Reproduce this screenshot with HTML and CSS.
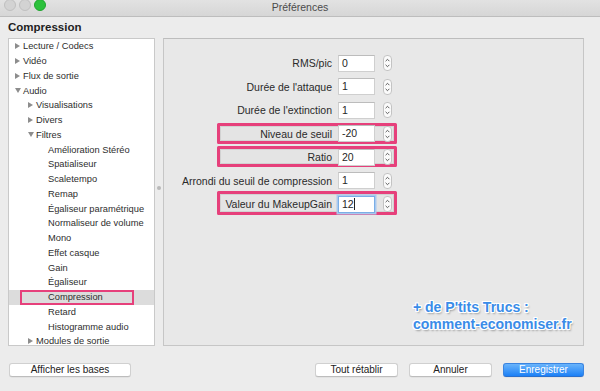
FILE: index.html
```html
<!DOCTYPE html>
<html lang="fr">
<head>
<meta charset="utf-8">
<title>Préférences</title>
<link rel="stylesheet" href="styles.css">
</head>
<body>
<div class="window">
  <div class="titlebar">
    <div class="lights">
      <span class="light gray"></span>
      <span class="light gray"></span>
      <span class="light green"></span>
    </div>
    <div class="title">Préférences</div>
    <div></div>
  </div>
  <div class="heading">Compression</div>
  <div class="main">
    <div class="tree">
      <div class="row l0"><span class="arr right"></span>Lecture / Codecs</div>
      <div class="row l0"><span class="arr right"></span>Vidéo</div>
      <div class="row l0"><span class="arr right"></span>Flux de sortie</div>
      <div class="row l0"><span class="arr down"></span>Audio</div>
      <div class="row l1"><span class="arr right"></span>Visualisations</div>
      <div class="row l1"><span class="arr right"></span>Divers</div>
      <div class="row l1"><span class="arr down"></span>Filtres</div>
      <div class="row l2">Amélioration Stéréo</div>
      <div class="row l2">Spatialiseur</div>
      <div class="row l2">Scaletempo</div>
      <div class="row l2">Remap</div>
      <div class="row l2">Égaliseur paramétrique</div>
      <div class="row l2">Normaliseur de volume</div>
      <div class="row l2">Mono</div>
      <div class="row l2">Effet casque</div>
      <div class="row l2">Gain</div>
      <div class="row l2">Égaliseur</div>
      <div class="row l2 selected">Compression<span class="tree-hl"></span></div>
      <div class="row l2">Retard</div>
      <div class="row l2">Histogramme audio</div>
      <div class="row l1"><span class="arr right"></span>Modules de sortie</div>
    </div>
    <div class="splitter"><span class="grip"></span></div>
    <div class="panel">
      <div class="form">
        <div class="frow">
          <span class="lbl">RMS/pic</span><span class="input">0</span>
          <svg class="stepper" viewBox="0 0 9 16"><rect x="0.5" y="0.5" width="8" height="15" rx="3.5"/><path d="M2.6 6.2 L4.5 4.3 L6.4 6.2 M2.6 9.8 L4.5 11.7 L6.4 9.8"/></svg>
        </div>
        <div class="frow">
          <span class="lbl">Durée de l'attaque</span><span class="input">1</span>
          <svg class="stepper" viewBox="0 0 9 16"><rect x="0.5" y="0.5" width="8" height="15" rx="3.5"/><path d="M2.6 6.2 L4.5 4.3 L6.4 6.2 M2.6 9.8 L4.5 11.7 L6.4 9.8"/></svg>
        </div>
        <div class="frow">
          <span class="lbl">Durée de l'extinction</span><span class="input">1</span>
          <svg class="stepper" viewBox="0 0 9 16"><rect x="0.5" y="0.5" width="8" height="15" rx="3.5"/><path d="M2.6 6.2 L4.5 4.3 L6.4 6.2 M2.6 9.8 L4.5 11.7 L6.4 9.8"/></svg>
        </div>
        <div class="frow">
          <span class="hl"></span>
          <span class="lbl">Niveau de seuil</span><span class="input">-20</span>
          <svg class="stepper" viewBox="0 0 9 16"><rect x="0.5" y="0.5" width="8" height="15" rx="3.5"/><path d="M2.6 6.2 L4.5 4.3 L6.4 6.2 M2.6 9.8 L4.5 11.7 L6.4 9.8"/></svg>
        </div>
        <div class="frow">
          <span class="hl"></span>
          <span class="lbl">Ratio</span><span class="input">20</span>
          <svg class="stepper" viewBox="0 0 9 16"><rect x="0.5" y="0.5" width="8" height="15" rx="3.5"/><path d="M2.6 6.2 L4.5 4.3 L6.4 6.2 M2.6 9.8 L4.5 11.7 L6.4 9.8"/></svg>
        </div>
        <div class="frow">
          <span class="lbl">Arrondi du seuil de compression</span><span class="input">1</span>
          <svg class="stepper" viewBox="0 0 9 16"><rect x="0.5" y="0.5" width="8" height="15" rx="3.5"/><path d="M2.6 6.2 L4.5 4.3 L6.4 6.2 M2.6 9.8 L4.5 11.7 L6.4 9.8"/></svg>
        </div>
        <div class="frow">
          <span class="hl tall"></span>
          <span class="lbl">Valeur du MakeupGain</span><span class="input focus">12<span class="caret"></span></span>
          <svg class="stepper" viewBox="0 0 9 16"><rect x="0.5" y="0.5" width="8" height="15" rx="3.5"/><path d="M2.6 6.2 L4.5 4.3 L6.4 6.2 M2.6 9.8 L4.5 11.7 L6.4 9.8"/></svg>
        </div>
      </div>
      <div class="watermark">+ de P'tits Trucs :<br>comment-economiser.fr</div>
    </div>
  </div>
  <div class="footer">
    <div class="btn show">Afficher les bases</div>
    <div class="btn reset">Tout rétablir</div>
    <div class="btn cancel">Annuler</div>
    <div class="btn primary">Enregistrer</div>
  </div>
</div>
</body>
</html>
```
FILE: styles.css
```css
html, body {
  margin: 0;
  padding: 0;
}
body {
  width: 600px;
  height: 391px;
  overflow: hidden;
  background: #ececec;
  font-family: "Liberation Sans", Arial, sans-serif;
  color: #262626;
}
.window {
  width: 600px;
  height: 391px;
  display: flex;
  flex-direction: column;
}
.titlebar {
  height: 16px;
  flex: none;
  display: grid;
  grid-template-columns: 1fr auto 1fr;
  align-items: center;
  background: linear-gradient(#e2e2e2, #d6d6d6);
  border-bottom: 1px solid #bdbdbd;
}
.lights {
  display: flex;
  gap: 3px;
  padding-left: 4px;
  align-self: start;
  margin-top: -1px;
}
.light {
  width: 12px;
  height: 12px;
  border-radius: 50%;
  box-sizing: border-box;
}
.light.gray {
  background: #d3d3d3;
  border: 1px solid #c0c0c0;
}
.light.green {
  background: #2cc13c;
  border: 1px solid #1fa52f;
}
.title {
  font-size: 10.5px;
  color: #4a4a4a;
  line-height: 14px;
  margin-top: -2px;
}
.heading {
  flex: none;
  height: 21px;
  line-height: 21px;
  padding-left: 8px;
  font-size: 11.5px;
  font-weight: bold;
  color: #1e1e1e;
}
.main {
  flex: none;
  height: 308px;
  display: flex;
  padding-left: 8px;
}
.tree {
  width: 147px;
  box-sizing: border-box;
  background: #ffffff;
  border: 1px solid #c9c9c9;
  overflow: hidden;
  font-size: 9.3px;
  color: #2e2e2e;
}
.row {
  height: 14.75px;
  display: flex;
  align-items: center;
  white-space: nowrap;
  position: relative;
}
.row.l0 { padding-left: 6px; }
.row.l1 { padding-left: 19px; }
.row.l2 { padding-left: 39px; }
.row.selected { background: #dcdcdc; }
.arr {
  width: 0;
  height: 0;
  margin-right: 3px;
  flex: none;
}
.arr.right {
  border-left: 5px solid #8d8d8d;
  border-top: 3px solid transparent;
  border-bottom: 3px solid transparent;
}
.arr.down {
  border-top: 5px solid #8d8d8d;
  border-left: 3px solid transparent;
  border-right: 3px solid transparent;
  margin-left: -0.5px;
  margin-right: 2.5px;
}
.tree-hl {
  position: absolute;
  left: 11px;
  top: 0;
  width: 114px;
  height: 15px;
  box-sizing: border-box;
  border: 2.5px solid #e6407b;
}
.splitter {
  width: 8px;
  flex: none;
  display: flex;
  align-items: center;
  justify-content: center;
}
.grip {
  width: 4px;
  height: 4px;
  border-radius: 50%;
  background: #b9b9b9;
  margin-bottom: 8px;
}
.panel {
  width: 421px;
  box-sizing: border-box;
  border: 1px solid #c6c6c6;
  border-top-color: #bdbdbd;
  background: #e8e8e8;
  position: relative;
}
.form {
  padding-top: 12.25px;
  display: flex;
  flex-direction: column;
}
.frow {
  height: 23.5px;
  display: flex;
  align-items: center;
  position: relative;
  font-size: 10.5px;
}
.lbl {
  width: 168px;
  text-align: right;
  margin-right: 6px;
  white-space: nowrap;
  position: relative;
  color: #2a2a2a;
}
.input {
  width: 37px;
  height: 17px;
  box-sizing: border-box;
  background: #ffffff;
  border: 1px solid #cfcfcf;
  border-top-color: #bcbcbc;
  padding-left: 3px;
  line-height: 15px;
  font-size: 10.5px;
  margin-right: 8px;
  position: relative;
  display: flex;
  align-items: center;
}
.input.focus {
  border: 1px solid #7aaee6;
  box-shadow: 0 0 0 1.5px #a9c9ef;
}
.caret {
  display: inline-block;
  width: 1px;
  height: 12px;
  background: #222;
  margin-left: 0.5px;
}
.stepper {
  width: 9px;
  height: 16px;
  position: relative;
}
.stepper rect {
  fill: #fbfbfb;
  stroke: #c3c3c3;
  stroke-width: 1;
}
.stepper path {
  fill: none;
  stroke: #4d4d4d;
  stroke-width: 0.9;
}
.hl {
  position: absolute;
  left: 53px;
  top: 1px;
  width: 180px;
  height: 21px;
  box-sizing: border-box;
  border: 3px solid #e6407b;
  border-radius: 1.5px;
  background: #e4e4e4;
  box-shadow: inset 0 0 0 1px #d2d2d2;
}
.hl.tall {
  top: -1px;
  height: 24px;
}
.watermark {
  position: absolute;
  left: 249px;
  top: 260px;
  font-size: 14px;
  line-height: 16.5px;
  font-weight: bold;
  color: #3a8ce8;
  white-space: nowrap;
  text-shadow:
    1px 0 0 #fff, -1px 0 0 #fff, 0 1px 0 #fff, 0 -1px 0 #fff,
    1px 1px 0 #fff, -1px -1px 0 #fff, 1px -1px 0 #fff, -1px 1px 0 #fff,
    1.5px 1.5px 2px rgba(0,0,0,0.35);
}
.footer {
  flex: none;
  display: flex;
  align-items: flex-start;
  padding: 16.5px 16px 0 9px;
}
.btn {
  height: 14px;
  box-sizing: border-box;
  background: #ffffff;
  border: 1px solid #d0d0d0;
  border-bottom-color: #bdbdbd;
  border-radius: 3px;
  font-size: 10px;
  line-height: 12px;
  text-align: center;
  color: #222;
  box-shadow: 0 0.5px 0.5px rgba(0,0,0,0.08);
}
.btn.show { width: 122px; }
.btn.reset { width: 83px; margin-left: auto; }
.btn.cancel { width: 83px; margin-left: 11px; }
.btn.primary {
  width: 81px;
  margin-left: 11px;
  color: #ffffff;
  background: linear-gradient(#6ab4fb, #1c80f6);
  border: 1px solid #3a84e0;
  border-bottom-color: #2a6fcc;
}
```
